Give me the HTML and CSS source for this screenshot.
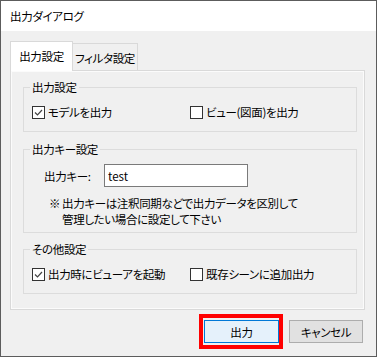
FILE: index.html
```html
<!DOCTYPE html>
<html lang="ja">
<head>
    <meta charset="UTF-8">
    <meta name="viewport" content="width=device-width, initial-scale=1.0">
    <title>出力ダイアログ</title>
    <link rel="stylesheet" href="styles.css">
</head>
<body>
    <div class="dialog">
        <div class="titlebar">出力ダイアログ</div>

        <div class="content">
            <div class="tabs">
                <div class="tab active">出力設定</div>
                <div class="tab">フィルタ設定</div>
            </div>

            <div class="panel">
                <fieldset class="group">
                    <legend>出力設定</legend>
                    <div class="check-row">
                        <label class="check">
                            <span class="box checked">
                                <svg width="11" height="11" viewBox="0 0 11 11"><path d="M2 5.5 L4.5 8 L9 3" fill="none" stroke="#444" stroke-width="1.2"/></svg>
                            </span>
                            モデルを出力
                        </label>
                        <label class="check">
                            <span class="box"></span>
                            ビュー(図面)を出力
                        </label>
                    </div>
                </fieldset>

                <fieldset class="group key-group">
                    <legend>出力キー設定</legend>
                    <div class="key-row">
                        <label for="output-key" class="key-label">出力キー:</label>
                        <input type="text" id="output-key" class="key-input" value="test">
                    </div>
                    <div class="note">
                        <span class="note-mark">※</span>
                        <span class="note-text">出力キーは注釈同期などで出力データを区別して<br>管理したい場合に設定して下さい</span>
                    </div>
                </fieldset>

                <fieldset class="group">
                    <legend>その他設定</legend>
                    <div class="check-row">
                        <label class="check">
                            <span class="box checked">
                                <svg width="11" height="11" viewBox="0 0 11 11"><path d="M2 5.5 L4.5 8 L9 3" fill="none" stroke="#444" stroke-width="1.2"/></svg>
                            </span>
                            出力時にビューアを起動
                        </label>
                        <label class="check">
                            <span class="box"></span>
                            既存シーンに追加出力
                        </label>
                    </div>
                </fieldset>
            </div>

            <div class="buttons">
                <span class="highlight">
                    <button class="btn btn-default">出力</button>
                </span>
                <button class="btn">キャンセル</button>
            </div>
        </div>
    </div>
</body>
</html>
```

FILE: styles.css
```css
* {
    box-sizing: border-box;
}
body {
    margin: 0;
    font-family: "Noto Sans CJK JP", "Noto Sans", sans-serif;
    font-size: 11.5px;
    line-height: 16px;
    letter-spacing: -0.35px;
    font-feature-settings: "palt";
    color: #000;
    background-color: #fff;
}
.dialog {
    width: 377px;
    height: 357px;
    border: 1px solid #5c5c5c;
    background-color: #f0f0f0;
    overflow: hidden;
}
.titlebar {
    height: 30px;
    padding: 7px 0 0 9px;
    background-color: #fff;
}
.content {
    padding: 10px 11px 0 9px;
}
.tabs {
    display: flex;
    align-items: flex-end;
    height: 30px;
    margin-bottom: -1px;
    position: relative;
    z-index: 1;
}
.tab {
    width: 65px;
    height: 28px;
    padding-top: 6px;
    text-align: center;
    white-space: nowrap;
    border: 1px solid #d9d9d9;
    border-left: none;
    background-color: #f0f0f0;
}
.tab.active {
    width: 63px;
    height: 30px;
    padding-top: 6px;
    border-left: 1px solid #d9d9d9;
    border-bottom: none;
    background-color: #fff;
}
.panel {
    height: 240px;
    padding: 8px 7px 0 12px;
    border: 1px solid #d9d9d9;
    box-shadow: inset 0 0 0 1px #fbfbfb;
}
.group {
    margin: 0;
    padding: 9px 8px 11px 8px;
    border: 1px solid #dcdcdc;
}
.group legend {
    margin-left: -2px;
    padding: 0 2px;
    line-height: 16px;
}
.key-group {
    margin: 9px 0 8px;
    padding-top: 7px;
    padding-bottom: 5px;
}
.check-row {
    display: flex;
}
.check {
    display: flex;
    align-items: center;
    gap: 3px;
    width: 158px;
    white-space: nowrap;
}
.box {
    display: inline-flex;
    align-items: center;
    justify-content: center;
    width: 13px;
    height: 13px;
    flex-shrink: 0;
    border: 1px solid #333;
    background-color: #fff;
}
.key-row {
    display: flex;
    align-items: center;
}
.key-label {
    width: 60px;
    margin-left: 12px;
}
.key-input {
    width: 144px;
    height: 23px;
    padding: 0 3px;
    border: 1px solid #7a7a7a;
    font: inherit;
    letter-spacing: 0;
    font-feature-settings: "palt";
    outline: none;
}
.note {
    display: flex;
    margin: 8px 0 0 17px;
}
.note-mark {
    width: 13px;
    flex-shrink: 0;
}
.buttons {
    display: flex;
    justify-content: flex-end;
    align-items: center;
    gap: 6px;
    margin: 4px 2px 0 0;
}
.highlight {
    display: flex;
    padding: 2px 0 2px 1px;
    border: 4px solid #f00;
}
.btn {
    width: 74px;
    height: 23px;
    padding: 0;
    border: 1px solid #adadad;
    background-color: #e1e1e1;
    font: inherit;
    letter-spacing: inherit;
    font-feature-settings: "palt";
    color: #000;
}
.btn-default {
    width: 75px;
    border-color: #0078d7;
    background-color: #e5f1fb;
}
```
